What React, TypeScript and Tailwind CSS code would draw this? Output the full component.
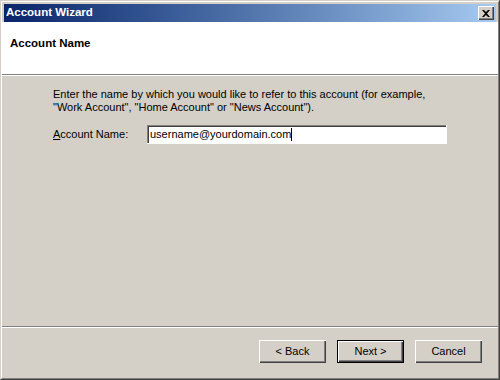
import React from "react";

const font = { fontFamily: '"Liberation Sans", Tahoma, Arial, sans-serif' };

function WinButton({ label, isDefault }: { label: React.ReactNode; isDefault?: boolean }) {
  return (
    <button
      className={
        "w-[67px] h-[23px] bg-[#d4d0c8] text-[11px] text-black flex items-center justify-center " +
        (isDefault
          ? "border border-black shadow-[inset_1px_1px_0_#fff,inset_-1px_-1px_0_#404040,inset_-2px_-2px_0_#808080]"
          : "shadow-[inset_1px_1px_0_#fff,inset_-1px_-1px_0_#404040,inset_-2px_-2px_0_#808080]")
      }
    >
      {label}
    </button>
  );
}

export default function App() {
  return (
    <div
      className="w-[500px] h-[380px] bg-[#d4d0c8] border-t border-l border-t-[#d4d0c8] border-l-[#d4d0c8] border-r border-b border-r-[#404040] border-b-[#404040] text-black select-none"
      style={font}
    >
      <div className="h-full flex flex-col border-t border-l border-white border-r border-b border-r-[#808080] border-b-[#808080] p-[2px]">
        {/* Title bar */}
        <div className="h-[18px] flex items-center justify-between bg-gradient-to-r from-[#0a246a] to-[#a6caf0] pl-[2px] pr-[2px]">
          <span className="text-white font-bold text-[11.5px] leading-none">Account Wizard</span>
          <div className="w-[16px] h-[14px] bg-[#d4d0c8] flex items-center justify-center shadow-[inset_1px_1px_0_#fff,inset_-1px_-1px_0_#404040,inset_-2px_-2px_0_#808080]">
            <svg width="8" height="7" viewBox="0 0 8 7">
              <path d="M0 0h2l2 2 2-2h2L5 3.5 8 7H6L4 5 2 7H0l3-3.5z" fill="#000" />
            </svg>
          </div>
        </div>

        {/* Header */}
        <div className="h-[53px] bg-white border-b border-b-[#808080] pl-[8px] pt-[13px] -mx-[2px]">
          <div className="font-bold text-[11.5px]">Account Name</div>
        </div>
        <div className="h-px bg-white -mx-[2px]" />

        {/* Body */}
        <div className="flex-1 pl-[49px] pt-[12px] text-[11px] leading-[13px]">
          <p>
            Enter the name by which you would like to refer to this account (for example,
            <br />
            "Work Account", "Home Account" or "News Account").
          </p>
          <div className="flex items-center mt-[11px]">
            <label className="w-[94px]">
              <span className="underline">A</span>ccount Name:
            </label>
            <div className="w-[300px] h-[19px] bg-white flex items-center pl-[3px] shadow-[inset_1px_1px_0_#808080,inset_2px_2px_0_#404040] border-r border-b border-white">
              <span>username@yourdomain.com</span>
              <span className="w-px h-[13px] bg-black" />
            </div>
          </div>
        </div>

        {/* Separator */}
        <div className="h-px bg-[#808080] -mx-[2px]" />
        <div className="h-px bg-white -mx-[2px]" />

        {/* Buttons */}
        <div className="h-[48px] flex items-start justify-end pt-[12px] pr-[14px] gap-[11px]">
          <WinButton label="< Back" />
          <WinButton label="Next >" isDefault />
          <WinButton label="Cancel" />
        </div>
      </div>
    </div>
  );
}
